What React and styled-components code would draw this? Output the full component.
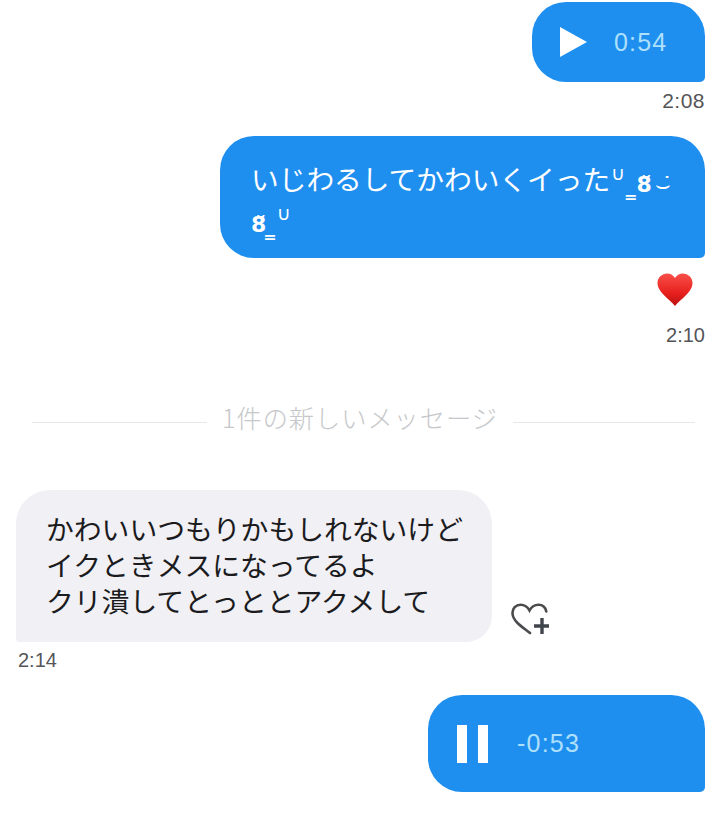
import React from "react";
import styled, { createGlobalStyle } from "styled-components";

const GlobalStyle = createGlobalStyle`
  html, body {
    margin: 0;
    padding: 0;
    background-color: #FFFFFF;
  }
`;

const Page = styled.div`
  width: 720px;
  height: 820px;
  overflow: hidden;
  box-sizing: border-box;
  padding: 2px 15px 0 16px;
  display: flex;
  flex-flow: column nowrap;
  font-family: "Noto Sans CJK JP", "Noto Sans", sans-serif;
`;

const Sent = styled.div`
  display: flex;
  flex-flow: column nowrap;
  align-items: flex-end;
  margin-top: ${(p) => p.$top || 0}px;
`;

const Bubble = styled.div`
  box-sizing: border-box;
  background-color: #1e8eef;
  border-radius: 34px 34px 5px 34px;
  color: #ffffff;
`;

const AudioBubble = styled(Bubble)`
  width: ${(p) => p.$width}px;
  height: ${(p) => p.$height}px;
  padding-left: ${(p) => p.$pad}px;
  display: flex;
  align-items: center;
  gap: ${(p) => p.$gap}px;
`;

const Duration = styled.span`
  font-family: "Liberation Sans", Arial, sans-serif;
  font-size: 25px;
  letter-spacing: 1.2px;
  color: #aee0fb;
`;

const TextBubble = styled(Bubble)`
  width: 485px;
  height: 122px;
  padding: 22px 0 0 31px;
  font-size: 27.7px;
  line-height: 40px;
  white-space: nowrap;
`;

const Up = styled.span`
  font-family: "DejaVu Sans", sans-serif;
  font-size: 19px;
  line-height: 0;
  vertical-align: 10px;
  margin: 0 ${(p) => p.$gap || 0}px;
`;

const Under = styled.span`
  font-family: "DejaVu Sans", sans-serif;
  font-size: 16px;
  font-weight: 700;
  line-height: 0;
  vertical-align: -12px;
  margin-left: -2px;
`;

const Eye = styled.span`
  font-family: "DejaVu Sans", sans-serif;
  font-size: 22px;
  font-weight: 700;
  line-height: 0;
  vertical-align: -2px;
  letter-spacing: -1px;
  margin-left: ${(p) => p.$left || 0}px;
`;

const Smile = styled.span`
  font-family: "DejaVu Sans", sans-serif;
  font-size: 24px;
  line-height: 0;
  vertical-align: -3px;
  margin-left: 4px;
`;

const Time = styled.div`
  font-family: "Liberation Sans", Arial, sans-serif;
  font-size: ${(p) => (p.$narrow ? 20 : 21)}px;
  line-height: 22px;
  letter-spacing: ${(p) => (p.$narrow ? 0 : 0.5)}px;
  color: #555558;
`;

const SentTime = styled(Time)`
  margin-top: ${(p) => p.$top}px;
`;

const HeartReaction = styled.div`
  margin: 15px 12px 0 0;
  height: 34px;
`;

const Divider = styled.div`
  margin: 54px 10px 0 16px;
  height: 34px;
  display: flex;
  align-items: center;
  gap: 15px;
`;

const DividerLine = styled.div`
  flex: ${(p) => (p.$width ? `0 0 ${p.$width}px` : 1)};
  height: 1px;
  margin-top: 10px;
  background-color: #e6e8ea;
`;

const DividerText = styled.span`
  font-size: 25.2px;
  font-weight: 300;
  line-height: 34px;
  letter-spacing: 1px;
  color: #c6c7ca;
`;

const Received = styled.div`
  margin-top: 56px;
  display: flex;
  align-items: flex-end;
  gap: 19px;
`;

const GreyBubble = styled.div`
  box-sizing: border-box;
  width: 476px;
  height: 152px;
  padding: 20px 0 0 30px;
  background-color: #f0f0f5;
  border-radius: 34px 34px 26px 4px;
  color: #1b1b1d;
  font-size: 27.8px;
  line-height: 36px;
  white-space: nowrap;
`;

const ReactIcon = styled.svg`
  display: block;
  margin-bottom: 5px;
`;

const ReceivedTime = styled(Time)`
  margin: 7px 0 0 2px;
`;

const RedHeart = () => (
  <svg width="36" height="34" viewBox="0 0 36 36" preserveAspectRatio="none">
    <defs>
      <linearGradient id="heartFill" x1="0" y1="0" x2="0" y2="1">
        <stop offset="0" stopColor="#f8504a" />
        <stop offset="0.6" stopColor="#e8201d" />
        <stop offset="1" stopColor="#b9100f" />
      </linearGradient>
    </defs>
    <path
      d="M18 35 C13 28 1 21 0.5 11.5 C0.2 5 5 0.6 10.3 0.6 C13.6 0.6 16.4 2.4 18 5.4 C19.6 2.4 22.4 0.6 25.7 0.6 C31 0.6 35.8 5 35.5 11.5 C35 21 23 28 18 35 Z"
      fill="url(#heartFill)"
    />
  </svg>
);

const HeartPlus = () => (
  <ReactIcon width="38" height="34" viewBox="0 0 38 34" fill="none">
    <path
      d="M19 30 C13 25 2 19 1.5 10.5 C1.2 5.5 5 1.7 9.5 1.7 C13 1.7 16.5 3.6 18.5 7.5 C20.5 3.6 24 1.7 27.5 1.7 C31.5 1.7 34.5 4.5 35.3 8.4"
      stroke="#4b4b4e"
      strokeWidth="2.6"
      strokeLinecap="round"
    />
    <path d="M31 15 V31 M23 23 H38" stroke="#40454c" strokeWidth="3.4" />
  </ReactIcon>
);

const App = () => {
  return (
    <Page>
      <GlobalStyle />
      <Sent>
        <AudioBubble $width={173} $height={80} $pad={28} $gap={27}>
          <svg width="27" height="30" viewBox="0 0 27 30">
            <path d="M0 0 L27 15 L0 30 Z" fill="#ffffff" />
          </svg>
          <Duration>0:54</Duration>
        </AudioBubble>
        <SentTime $top={8}>2:08</SentTime>
      </Sent>

      <Sent $top={24}>
        <TextBubble>
          いじわるしてかわいくイった<Up $gap={1}>∪</Up><Under>=</Under><Eye $left={-1}>8̆</Eye><Smile>⌣̇</Smile>
          <br />
          <Eye>8̆</Eye><Under>=</Under><Up>∪</Up>
        </TextBubble>
        <HeartReaction>
          <RedHeart />
        </HeartReaction>
        <SentTime $top={17} $narrow>2:10</SentTime>
      </Sent>

      <Divider>
        <DividerLine $width={175} />
        <DividerText>1件の新しいメッセージ</DividerText>
        <DividerLine />
      </Divider>

      <Received>
        <GreyBubble>
          かわいいつもりかもしれないけど
          <br />
          イクときメスになってるよ
          <br />
          クリ潰してとっととアクメして
        </GreyBubble>
        <HeartPlus />
      </Received>
      <ReceivedTime $narrow>2:14</ReceivedTime>

      <Sent $top={24}>
        <AudioBubble $width={277} $height={97} $pad={29} $gap={29}>
          <svg width="31" height="38" viewBox="0 0 31 38">
            <rect x="0" y="0" width="10" height="38" fill="#ffffff" />
            <rect x="21" y="0" width="10" height="38" fill="#ffffff" />
          </svg>
          <Duration>-0:53</Duration>
        </AudioBubble>
      </Sent>
    </Page>
  );
};

export default App;
